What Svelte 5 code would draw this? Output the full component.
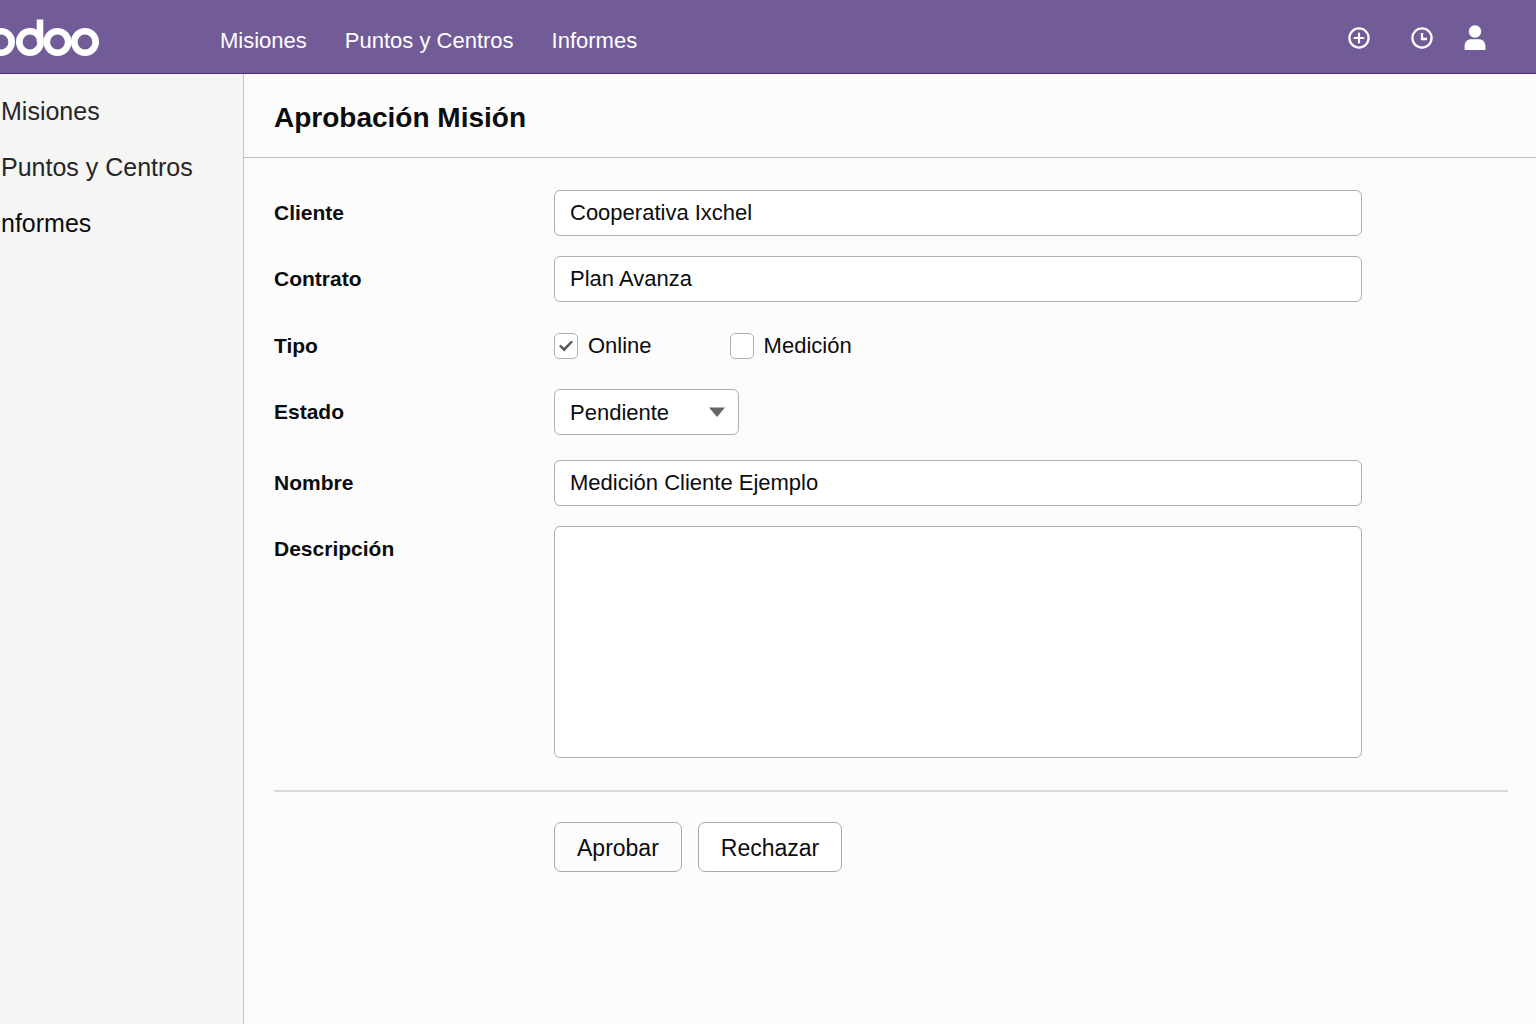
<script>
  const sections = ['Misiones', 'Puntos y Centros', 'Informes'];
  const sideItems = ['Misiones', 'Puntos y Centros', 'nformes'];
  let cliente = $state('Cooperativa Ixchel');
  let contrato = $state('Plan Avanza');
  let online = $state(true);
  let medicion = $state(false);
  let estado = $state('Pendiente');
  let nombre = $state('Medición Cliente Ejemplo');
  let descripcion = $state('');
</script>

<div class="app">
  <header>
    <a class="logo" href="#inicio" aria-label="odoo">
      <svg width="100" height="40" viewBox="0 0 100 40" fill="none" stroke="#fff" stroke-width="6.600">
        <circle cx="1" cy="25" r="10.700" />
        <circle cx="30" cy="25" r="10.700" />
        <path d="M40 25V2.500" />
        <circle cx="57.500" cy="25" r="10.700" />
        <circle cx="85" cy="25" r="10.700" />
      </svg>
    </a>
    <nav class="top" aria-label="Principal">
      {#each sections as s}<a href="#{s}">{s}</a>{/each}
    </nav>
    <div class="tools">
      <button aria-label="Nuevo">
        <svg width="22" height="22" viewBox="0 0 22 22" fill="none" stroke="#fff">
          <circle cx="11" cy="11" r="9.600" stroke-width="2.300" />
          <path d="M11 6.500v9M6.500 11h9" stroke-width="2.200" stroke-linecap="round" />
        </svg>
      </button>
      <button aria-label="Actividades">
        <svg width="22" height="22" viewBox="0 0 22 22" fill="none" stroke="#fff">
          <circle cx="11" cy="11" r="9.600" stroke-width="2.300" />
          <path d="M11 6V12H16" stroke-width="2.300" />
        </svg>
      </button>
      <button aria-label="Usuario">
        <svg width="22" height="26" viewBox="0 0 22 26" fill="#fff">
          <circle cx="11" cy="6.500" r="6.200" />
          <path d="M.6 25v-4c0-4 3-6.700 6.500-6.700h7.800c3.500 0 6.500 2.700 6.500 6.700v4z" />
        </svg>
      </button>
    </div>
  </header>

  <div class="body">
    <aside>
      <nav class="side" aria-label="Secciones">
        {#each sideItems as s, i}<a href="#{sections[i]}">{s}</a>{/each}
      </nav>
    </aside>

    <main>
      <h1>Aprobación Misión</h1>
      <form onsubmit={(e) => e.preventDefault()}>
        <div class="fields">
          <label class="name" for="cliente">Cliente</label>
          <input id="cliente" class="box" type="text" bind:value={cliente} />

          <label class="name" for="contrato">Contrato</label>
          <input id="contrato" class="box" type="text" bind:value={contrato} />

          <span class="name" id="tipo">Tipo</span>
          <div class="checks" role="group" aria-labelledby="tipo">
            <label><input type="checkbox" bind:checked={online} />Online</label>
            <label><input type="checkbox" bind:checked={medicion} />Medición</label>
          </div>

          <label class="name" for="estado">Estado</label>
          <div class="state">
            <select id="estado" class="box" bind:value={estado}>
              <option>Pendiente</option>
              <option>Aprobada</option>
              <option>Rechazada</option>
            </select>
            <svg width="16" height="10" viewBox="0 0 16 10" fill="#666" aria-hidden="true"><path d="M0 .5h16L8 10z" /></svg>
          </div>

          <label class="name" for="nombre">Nombre</label>
          <input id="nombre" class="box" type="text" bind:value={nombre} />

          <label class="name" for="descripcion">Descripción</label>
          <textarea id="descripcion" class="box" bind:value={descripcion}></textarea>
        </div>
        <div class="actions">
          <button type="submit">Aprobar</button>
          <button type="button" class="reject">Rechazar</button>
        </div>
      </form>
    </main>
  </div>
</div>

<style>
  :global(body) {
    margin: 0;
    background: #fcfcfc;
  }
  .app {
    display: flex;
    flex-direction: column;
    min-height: 100vh;
    overflow-x: hidden;
    font-family: 'Liberation Sans', Arial, sans-serif;
    font-size: 22px;
    color: #0c0c0e;
  }
  .app * {
    box-sizing: border-box;
  }
  a {
    color: inherit;
    text-decoration: none;
  }
  header {
    display: flex;
    align-items: center;
    height: 74px;
    background: #725c98;
    border-bottom: 1px solid #4a2c78;
    color: #fff;
  }
  .logo {
    display: flex;
    width: 220px;
  }
  .top {
    display: flex;
    gap: 38px;
    padding-top: 8px;
  }
  .tools {
    display: flex;
    align-items: center;
    margin-left: auto;
    padding-top: 2px;
    padding-right: 50px;
  }
  .tools button {
    display: flex;
    padding: 0;
    border: 0;
    background: none;
  }
  .tools button:nth-child(2) {
    margin-left: 41px;
    margin-right: 31px;
  }
  .body {
    display: flex;
    flex: 1;
  }
  aside {
    flex: none;
    width: 244px;
    background: #f5f5f4;
    border-right: 1px solid #c2c2c4;
  }
  .side {
    display: flex;
    flex-direction: column;
    gap: 26px;
    padding: 22px 0 0 1px;
    font-size: 25px;
    line-height: 30px;
    color: #262628;
  }
  .side a:last-child {
    color: #0c0c0e;
  }
  main {
    flex: 1;
    min-width: 0;
  }
  h1 {
    margin: 0;
    padding: 26px 30px 21px;
    border-bottom: 1px solid #bdbdbf;
    font-size: 28px;
    line-height: 36px;
  }
  form {
    padding: 32px 28px 32px 30px;
  }
  .fields {
    display: grid;
    grid-template-columns: 280px minmax(0, 1fr);
    row-gap: 20px;
    padding-right: 146px;
    padding-bottom: 32px;
    border-bottom: 2px solid #dadadc;
  }
  .name {
    font-size: 21px;
    font-weight: bold;
    line-height: 46px;
  }
  .box {
    width: 100%;
    height: 46px;
    margin: 0;
    padding: 0 15px;
    border: 1px solid #b0b0b2;
    border-radius: 6px;
    background: #fff;
    color: inherit;
    font: inherit;
  }
  #tipo,
  .checks {
    padding-top: 1px;
  }
  .checks {
    display: flex;
    align-items: center;
    gap: 78px;
  }
  .checks label {
    display: flex;
    align-items: center;
    gap: 10px;
  }
  .checks input {
    appearance: none;
    display: grid;
    place-items: center;
    width: 24px;
    height: 26px;
    margin: 0;
    border: 1px solid #b0b0b2;
    border-radius: 5px;
    background: #fff;
  }
  .checks input:checked::before {
    content: '';
    width: 14px;
    height: 11px;
    background: #58585a;
    clip-path: polygon(0 52%, 12% 38%, 36% 66%, 88% 0, 100% 14%, 37% 100%);
  }
  .state {
    display: grid;
    align-items: center;
    width: 185px;
    margin-bottom: 5px;
  }
  .state > * {
    grid-area: 1 / 1;
  }
  .state select {
    appearance: none;
  }
  .state svg {
    justify-self: end;
    margin-right: 14px;
    pointer-events: none;
  }
  textarea.box {
    display: block;
    height: 232px;
    padding: 10px 15px;
    resize: none;
  }
  .actions {
    display: flex;
    gap: 16px;
    padding: 30px 0 0 280px;
  }
  .actions button {
    height: 50px;
    padding: 2px 22px 0;
    border: 1px solid #a8a8aa;
    border-radius: 7px;
    background: #fcfcfc;
    color: inherit;
    font: inherit;
    font-size: 23px;
  }
  .actions .reject {
    background: #fff;
  }
</style>
